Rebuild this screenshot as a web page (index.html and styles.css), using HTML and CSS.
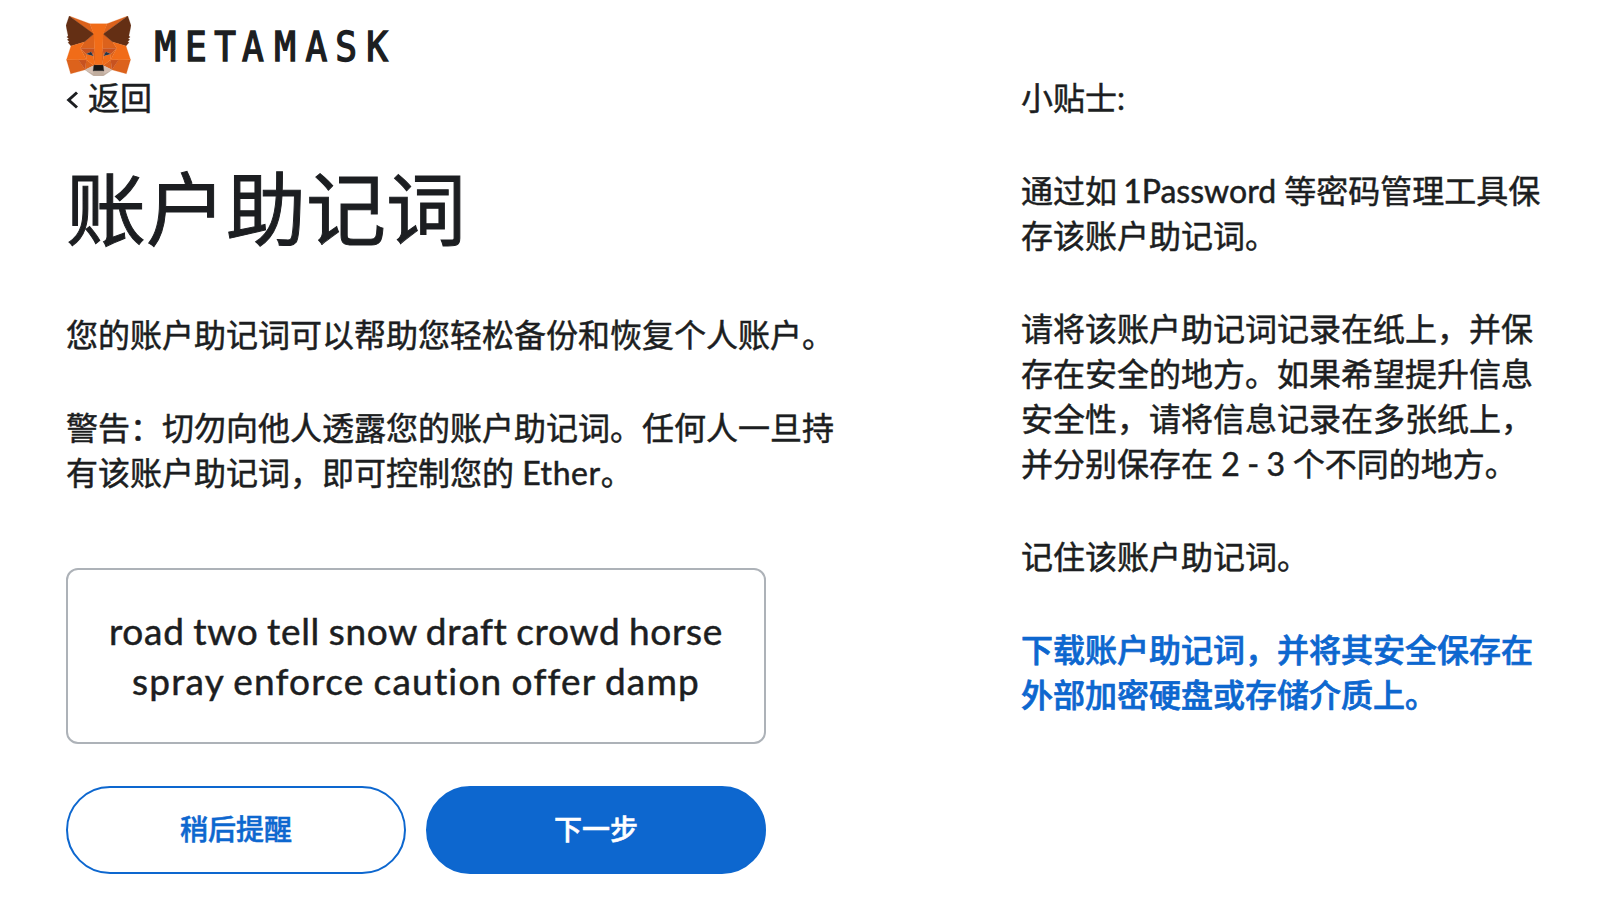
FILE: index.html
```html
<!DOCTYPE html>
<html lang="zh-CN">
<head>
<meta charset="utf-8">
<title>MetaMask</title>
<link rel="stylesheet" href="styles.css">
</head>
<body>
<header class="brand">
  <svg class="fox" viewBox="31.8 35.5 255 236.4" preserveAspectRatio="none" aria-hidden="true">
    <g stroke-linejoin="round" stroke-width="1">
    <path class="f-deep" d="M274.1 35.5l-99.5 73.9L193 65.8zM44.4 35.5l98.7 74.6-17.5-44.3zM238.3 206.8l-26.5 40.6 56.7 15.6 16.3-55.3zM33.9 207.7L50.1 263l56.7-15.6-26.5-40.6zM103.6 138.2l-15.8 23.9 56.3 2.5-2-60.5zM214.9 138.2l-39-34.8-1.3 61.2 56.2-2.5zM106.8 247.4l33.8-16.5-29.2-22.8zM177.9 230.9l33.9 16.5-4.7-39.3z"/>
    <path class="f-beige" d="M211.8 247.4l-33.9-16.5 2.7 22.1-.3 9.3zM106.8 247.4l31.5 14.9-.2-9.3 2.5-22.1z"/>
    <path class="f-rust" d="M106.8 247.4l4.8-40.6-31.3.9zM207 206.8l4.8 40.6 26.5-39.7zM230.8 162.1l-56.2 2.5 5.2 28.9 8.3-17.4 20 9.1zM110.6 185.2l20-9.1 8.2 17.4 5.3-28.9-56.3-2.5z"/>
    <path class="f-deep" d="M87.8 162.1l23.6 46-.8-22.9zM208.1 185.2l-1 22.9 23.7-46zM144.1 164.6l-5.3 28.9 6.6 34.1 1.5-44.9zM174.6 164.6l-2.7 18 1.2 45 6.7-34.1z"/>
    <path class="f-bright" d="M179.8 193.5l-6.7 34.1 4.8 3.3 29.2-22.8 1-22.9zM110.6 185.2l.8 22.9 29.2 22.8 4.8-3.3-6.6-34.1z"/>
    <path class="f-eye" d="M138.8 193.5l-28.2-8.3 19.9-9.1zM179.7 193.5l8.3-17.4 20 9.1z"/>
    <path class="f-chin" d="M180.3 262.3l.3-9.3-2.5-2.2h-37.7l-2.3 2.2.2 9.3-31.5-14.9 11 9 22.3 15.5h38.3l22.4-15.5 11-9z"/>
    <path class="f-nose" d="M177.9 230.9l-4.8-3.3h-27.7l-4.8 3.3-2.5 22.1 2.3-2.2h37.7l2.5 2.2z"/>
    <path class="f-ear" d="M278.3 114.2l8.5-40.8-12.7-37.9-96.2 71.4 37 31.3 52.3 15.3 11.6-13.5-5-3.6 8-7.3-6.2-4.8 8-6.1zM31.8 73.4l8.5 40.8-5.4 4 8 6.1-6.1 4.8 8 7.3-5 3.6 11.5 13.5 52.3-15.3 37-31.3-96.2-71.4z"/>
    <path class="f-bright" d="M267.2 153.5l-52.3-15.3 15.9 23.9-23.7 46 31.2-.4h46.5zM103.6 138.2l-52.3 15.3-17.4 54.2h46.4l31.1.4-23.6-46zM174.6 164.6l3.3-57.7 15.2-41.1h-67.5l15 41.1 3.5 57.7 1.2 18.2.1 44.8h27.7l.2-44.8z"/>
    </g>
  </svg>
  <svg class="wordmark" viewBox="0 0 260 50"><text text-anchor="middle" transform="scale(.88 1)" y="39.6" x="16.4 50.9 84.3 115.7 152.5 188 221.8 257">METAMASK</text></svg>
</header>
<main class="columns">
  <section class="main">
    <a class="back"><svg class="chevron" viewBox="0 0 12 18"><path d="M10.5 1.5L2.2 9l8.3 7.5"/></svg>返回</a>
    <h1>账户助记词</h1>
    <p>您的账户助记词可以帮助您轻松备份和恢复个人账户。</p>
    <p>警告：切勿向他人透露您的账户助记词。任何人一旦持有该账户助记词，即可控制您的 <span class="ether">Ether</span>。</p>
    <div class="phrase"><span class="row1">road two tell snow draft crowd horse</span><span class="row2">spray enforce caution offer damp</span></div>
    <div class="actions"><button class="btn outline">稍后提醒</button><button class="btn primary">下一步</button></div>
  </section>
  <aside class="tips">
    <p>小贴士:</p>
    <p>通过如 <span class="onepass">1Password</span> 等密码管理工具保存该账户助记词。</p>
    <p>请将该账户助记词记录在纸上，并保存在安全的地方。如果希望提升信息安全性，请将信息记录在多张纸上，并分别保存在 <span class="nums">2 - 3</span> 个不同的地方。</p>
    <p>记住该账户助记词。</p>
    <p><a class="download">下载账户助记词，并将其安全保存在外部加密硬盘或存储介质上。</a></p>
  </aside>
</main>
</body>
</html>
```
FILE: styles.css
```css
* { box-sizing: border-box; }
body {
  margin: 0;
  padding: 16px 0 0 66px;
  background: #fff;
  color: #1c1e21;
  font: 400 32px/45px Lato, "Noto Sans CJK SC", sans-serif;
  -webkit-text-stroke: .5px currentColor;
  overflow: hidden;
}
.brand { display: flex; height: 60px; }
.fox { width: 65px; height: 60px; }
.f-deep { fill: #dc621c; stroke: #dc621c; }
.f-beige { fill: #d5bfb2; stroke: #d5bfb2; }
.f-rust { fill: #c75220; stroke: #c75220; }
.f-eye { fill: #233447; }
.f-bright { fill: #f16c18; stroke: #f16c18; }
.f-chin { fill: #c0ad9e; stroke: #c0ad9e; }
.f-nose { fill: #161616; stroke: #161616; }
.f-ear { fill: #642f14; stroke: #642f14; }
.wordmark { width: 260px; height: 50px; margin: 5px 0 0 20px; overflow: visible; }
.wordmark text {
  font: 400 41px "DejaVu Sans Mono", monospace;
  fill: #1c1e21;
  -webkit-text-stroke: 0;
  stroke: #1c1e21;
  stroke-width: 1.5;
}
.columns { display: flex; gap: 165px; }
.main { width: 790px; }
.tips { width: 527px; margin-top: -1px; }
p { margin: 0 0 48px; }
.back { display: flex; align-items: center; gap: 9px; margin-top: -1px; }
.chevron { width: 13px; height: 18px; fill: none; stroke: #1c1e21; stroke-width: 3; margin-top: 5px; }
h1 {
  margin: 32px 0 48px;
  font-size: 80px;
  line-height: 112px;
  font-weight: 400;
  -webkit-text-stroke-width: 1px;
}
.ether { letter-spacing: .6px; }
.onepass { margin: 0 0 0 -2px; }
.nums { letter-spacing: -.4px; }
.phrase {
  display: flex;
  flex-direction: column;
  justify-content: center;
  align-items: center;
  width: 700px;
  height: 176px;
  margin-top: 73px;
  border: 2px solid #adb2b8;
  border-radius: 12px;
  font-size: 37px;
  line-height: 50.4px;
  font-variant-ligatures: none;
  white-space: nowrap;
}
.row1 { letter-spacing: .7px; word-spacing: -1.5px; }
.row2 { letter-spacing: 1.2px; word-spacing: -1.5px; }
.actions { display: flex; gap: 20px; margin-top: 42px; }
.btn {
  width: 340px;
  height: 88px;
  padding: 0 0 2px;
  border: 2px solid #0d67cf;
  border-radius: 44px;
  font: 500 28px/40px Lato, "Noto Sans CJK SC", sans-serif;
  -webkit-text-stroke: .5px currentColor;
}
.outline { background: #fff; color: #0d67cf; }
.primary { background: #0d67cf; color: #fff; }
.download { color: #0d67cf; font-weight: 500; -webkit-text-stroke-width: .7px; }
```
